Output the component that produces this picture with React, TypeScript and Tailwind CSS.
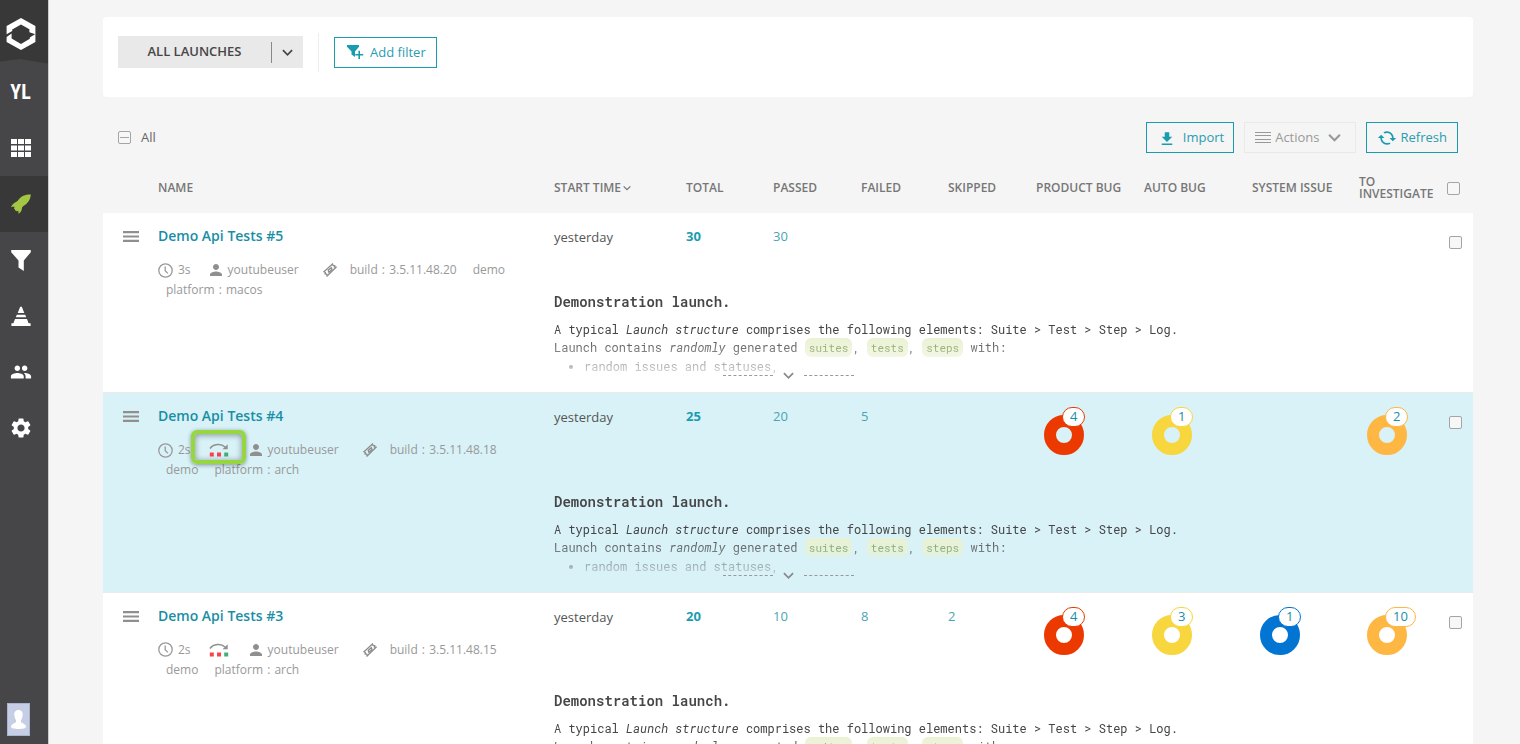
import React from "react";
import { MdCached, MdFileDownload, MdPeople, MdPerson, MdSettings } from "react-icons/md";

interface Attribute {
  key?: string;
  value: string;
}

interface Launch {
  number: number;
  duration: string;
  owner: string;
  attributes: Attribute[];
  retries: boolean;
  highlighted?: boolean;
  selected?: boolean;
  total: number;
  passed: number;
  failed?: number;
  skipped?: number;
  productBug?: number;
  autoBug?: number;
  systemIssue?: number;
  toInvestigate?: number;
}

const launches: Launch[] = [
  {
    number: 5,
    duration: "3s",
    owner: "youtubeuser",
    attributes: [{ key: "build", value: "3.5.11.48.20" }, { value: "demo" }, { key: "platform", value: "macos" }],
    retries: false,
    total: 30,
    passed: 30,
  },
  {
    number: 4,
    duration: "2s",
    owner: "youtubeuser",
    attributes: [{ key: "build", value: "3.5.11.48.18" }, { value: "demo" }, { key: "platform", value: "arch" }],
    retries: true,
    highlighted: true,
    selected: true,
    total: 25,
    passed: 20,
    failed: 5,
    productBug: 4,
    autoBug: 1,
    toInvestigate: 2,
  },
  {
    number: 3,
    duration: "2s",
    owner: "youtubeuser",
    attributes: [{ key: "build", value: "3.5.11.48.15" }, { value: "demo" }, { key: "platform", value: "arch" }],
    retries: true,
    total: 20,
    passed: 10,
    failed: 8,
    skipped: 2,
    productBug: 4,
    autoBug: 3,
    systemIssue: 1,
    toInvestigate: 10,
  },
];

const defectColors = {
  product: "border-[#ec3900]",
  auto: "border-[#f7d63e]",
  system: "border-[#0274d1]",
  investigate: "border-[#ffb743]",
};

function LogoIcon() {
  return (
    <svg width="30" height="34" viewBox="0 0 30 34" fill="#fff" aria-hidden="true">
      <path d="M15 1 29.400 9v8.200l-6 -2V12.300L15 7.400 6.200 12.500V14L.6 17.200V9z" />
      <path d="M15 33 .6 25V20l5-3.400v5L15 27l8.800-5.200v-1.400l5.600-3.400v8z" />
    </svg>
  );
}

function GridIcon() {
  const offsets = [0, 7, 14];
  return (
    <svg width="20" height="18" viewBox="0 0 20 18" fill="#fff" aria-hidden="true">
      {offsets.map((x) =>
        [0, 6.5, 13].map((y) => <rect key={`${x}-${y}`} x={x} y={y} width="6" height="5" />)
      )}
    </svg>
  );
}

function RocketIcon() {
  return (
    <svg width="20" height="20" viewBox="0 0 20 20" fill="#a3c644" aria-hidden="true">
      <path d="M19.800.4C14.500.3 10 2 7.300 6c-.5.8-1.100 1.300-1.900 1.700C2.800 8.700 1 10.700 0 13.300c1.100-.5 2.300-.6 3.600-.4l-.7 1.700 1.100.7-.2 1.100 1.300.1.600 1 1.500-.8c.4 1.200.5 2.200.2 3.300 2.300-1.500 3.400-3.500 3.600-6 .1-.8.700-1.300 1.400-1.900C16.700 9.300 19.600 5.500 19.800.4z" />
    </svg>
  );
}

function FunnelIcon() {
  return (
    <svg width="20" height="21" viewBox="0 0 20 21" fill="#fff" aria-hidden="true">
      <path d="M.2 0h19.600v2.200L12.800 10.500V21L7.500 17.500v-7L.2 2.200z" />
    </svg>
  );
}

function ConeIcon() {
  return (
    <svg width="20" height="20" viewBox="0 0 20 20" fill="#fff" aria-hidden="true">
      <path d="M9 1.200q1-1.400 2 0L13.300 7H6.700zM5.800 8.800h8.400l1 2.400H4.800zM4 13h12l1.600 4.200h2V20H.4v-2.800h2z" />
    </svg>
  );
}

function ClockIcon() {
  return (
    <svg width="15" height="15" viewBox="0 0 15 15" fill="none" stroke="#999" strokeWidth="1.300" aria-hidden="true">
      <circle cx="7.500" cy="7.500" r="6.700" />
      <path d="M7.200 3.500v4.300l2.700 2.600" />
    </svg>
  );
}

function TagIcon() {
  return (
    <svg width="14" height="14" viewBox="0 0 14 14" fill="none" stroke="#8c8c8c" strokeWidth="1.300" aria-hidden="true">
      <path d="M9.500 1 .9 8.700l1.500.8-.3 1.400 1.600.2.400 1.900 9-8.700-1.700-.3.300-1.400-1.700-.2z" />
      <path d="M8.300 4.700 5.200 7.300 5.900 9.300 9 6.600z" />
    </svg>
  );
}

function RetryIcon() {
  return (
    <svg width="20" height="14" viewBox="0 0 20 14" aria-hidden="true">
      <path d="M1 5.500C4.500.800 12 .200 16 4" fill="none" stroke="#8f8f8f" strokeWidth="1.600" />
      <path d="M18.700 1.200v5h-5.200z" fill="#8f8f8f" />
      <path d="M.8 9.500h4v4h-4zM8 9.500h4v4H8z" fill="#f9424a" />
      <path d="M15.200 9.500h4v4h-4z" fill="#41b073" />
    </svg>
  );
}

function ChevronIcon({ size, className }: { size: "sm" | "md" | "lg"; className?: string }) {
  const width = { sm: 8, md: 11, lg: 13 }[size];
  return (
    <svg width={width} height={width} viewBox="0 0 12 12" fill="none" stroke="currentColor" strokeWidth="1.900" className={className} aria-hidden="true">
      <path d="m1 3.500 5 5 5-5" />
    </svg>
  );
}

function Sidebar() {
  const item = "flex h-14 w-full items-center justify-center pr-[7px]";
  return (
    <nav aria-label="Main" className="flex h-full w-12 shrink-0 flex-col bg-[#464547]">
      <a href="#home" aria-label="Home" className="relative flex h-16 justify-center bg-[#383838] pr-[7px] pt-[17px]">
        <LogoIcon />
        <svg className="absolute bottom-0 left-0" width="48" height="5" viewBox="0 0 48 5" fill="#464547" aria-hidden="true">
          <path d="M0 2.500 20 0l28 4.500V5H0z" />
        </svg>
      </a>
      <a href="#project" className={`${item} font-['Roboto_Condensed','Open_Sans_Condensed','Roboto',sans-serif]`}>
        <span className="text-xl font-bold leading-5 text-white">YL</span>
      </a>
      <a href="#dashboards" aria-label="Dashboards" className={item}><GridIcon /></a>
      <a href="#launches" aria-label="Launches" aria-current="page" className={`${item} bg-[#383838]`}><RocketIcon /></a>
      <a href="#filters" aria-label="Filters" className={item}><FunnelIcon /></a>
      <a href="#debug" aria-label="Debug" className={item}><ConeIcon /></a>
      <a href="#members" aria-label="Members" className={item}><MdPeople size={22} color="#fff" /></a>
      <a href="#settings" aria-label="Settings" className={item}><MdSettings size={24} color="#fff" /></a>
      <button aria-label="Profile" className="mb-2 ml-[7px] mt-auto flex h-[33px] w-[23px] items-center justify-center border border-[#aab4d0] bg-[#c5cee5]">
        <svg width="15" height="19" viewBox="0 0 15 19" fill="#fff" aria-hidden="true">
          <path d="M7.500 0c3 0 4.400 2 4.200 5-.1 2.500-1 4-1.700 5v2c0 1 4.600 1.500 5 4.500.2 2-3 2.500-7.500 2.500S-.2 18.500 0 16.500C.4 13.500 5 13 5 12v-2C4.300 9 3.400 7.500 3.300 5 3.100 2 4.500 0 7.500 0z" />
        </svg>
      </button>
    </nav>
  );
}

function FilterBar() {
  return (
    <section className="flex h-20 items-start rounded-sm bg-white px-[15px] pt-4">
      <button className="mt-[3px] flex h-8 w-[185px] items-center bg-[#e9e9e9] font-semibold text-[#464547]">
        <span className="flex-1">ALL LAUNCHES</span>
        <span className="flex h-[21px] w-8 items-center justify-center border-l border-[#888]">
          <ChevronIcon size="md" />
        </span>
      </button>
      <div className="ml-[15px] h-[39px] w-px bg-[#eee]" />
      <button className="ml-[15px] mt-1 flex h-[31px] items-center gap-1.5 border border-[#1a9cb0] pl-3 pr-2.5 text-[#2a9cb0]">
        <svg width="17" height="15" viewBox="0 0 17 15" aria-hidden="true">
          <path d="M0 0h12v1.700L8 6.500V12L4.500 9.500v-3L0 1.700z" fill="#1a9cb0" />
          <path d="M8.300 9.700h7.900M12.200 5.800v8.200" stroke="#1a9cb0" strokeWidth="1.600" />
        </svg>
        Add filter
      </button>
    </section>
  );
}

const checkbox =
  "block size-[13px] appearance-none rounded-[2px] border border-[#a5a5a5] bg-[#f7f7f7]";

function Toolbar() {
  const button = "flex h-[31px] items-center border";
  return (
    <div className="flex h-[66px] items-start px-[15px] pt-[25px]">
      <label className="mt-1.5 flex items-center gap-2.5 text-[#666]">
        <input
          type="checkbox"
          className="flex size-[13px] appearance-none items-center rounded-[2px] border border-[#a5a5a5] bg-[#f7f7f7] px-px after:h-px after:w-full after:bg-[#a5a5a5]"
        />
        All
      </label>
      <div className="ml-auto flex gap-2.5">
        <button className={`${button} gap-[7px] border-[#1a9cb0] pl-[11px] pr-[9px] text-[#2a9cb0]`}>
          <MdFileDownload size={18} className="mt-0.5 text-[#1a9cb0]" />
          Import
        </button>
        <button className={`${button} gap-1 border-[#e9e9e9] px-2.5 text-[#999]`}>
          <svg width="16" height="11" viewBox="0 0 16 11" stroke="#999" strokeWidth="1.200" aria-hidden="true">
            <path d="M0 .5h16M0 3.500h16M0 7.500h16M0 10.500h16" />
          </svg>
          Actions
          <ChevronIcon size="lg" className="ml-1 mr-1" />
        </button>
        <button className={`${button} gap-1 border-[#1a9cb0] px-2.5 text-[#2a9cb0]`}>
          <MdCached size={20} className="-scale-x-100 text-[#1a9cb0]" />
          Refresh
        </button>
      </div>
    </div>
  );
}

function Donut({ count, kind }: { count?: number; kind: keyof typeof defectColors }) {
  if (count === undefined) return null;
  const color = defectColors[kind];
  return (
    <a href="#defects" className="relative ml-2 block w-10 pt-2">
      <span className={`block size-10 rounded-full border-12 ${color}`} />
      <span className={`absolute left-[18px] top-0 flex h-5 items-center rounded-full border bg-white px-[7px] text-[#1a8ea5] ${color}`}>
        {count}
      </span>
    </a>
  );
}

function Code({ children }: { children: React.ReactNode }) {
  return <code className="rounded-md bg-[#e9f1d2] px-1 py-0.5 font-[inherit] text-[11px] text-[#7d9a4b]">{children}</code>;
}

function Description() {
  return (
    <div className="relative h-[106px] overflow-hidden font-['Roboto_Mono','DejaVu_Sans_Mono',monospace] text-xs text-[#464547]">
      <div className="[mask-image:linear-gradient(#000_50px,transparent_98px)]">
        <h3 className="pt-1.5 text-sm font-semibold leading-5">Demonstration launch.</h3>
        <p className="mt-2 whitespace-nowrap leading-[18px]">
          A typical <em>Launch structure</em> comprises the following elements: Suite &gt; Test &gt; Step &gt; Log.
          <br />
          Launch contains <em>randomly</em> generated <Code>suites</Code>, <Code>tests</Code>, <Code>steps</Code> with:
        </p>
        <ul className="list-disc pl-[30px] leading-[18px]">
          <li>random issues and statuses,</li>
        </ul>
      </div>
      <button aria-label="Expand description" className="absolute bottom-[11px] left-[169px] flex items-center gap-2.5 text-[#888]">
        <span className="w-[50px] border-t border-dashed border-[#999]" />
        <ChevronIcon size="md" />
        <span className="w-[50px] border-t border-dashed border-[#999]" />
      </button>
    </div>
  );
}

function LaunchRows({ launch }: { launch: Launch }) {
  const hasDefects = launch.productBug !== undefined;
  const count = "pt-3.5 leading-[18px] text-[#4aa5b5]";
  return (
    <tbody className={`border-b border-[#ebebeb] align-top ${launch.selected ? "bg-[#d8f2f7]" : "bg-white"}`}>
      <tr className={hasDefects ? "h-[93px]" : "h-[73px]"}>
        <td rowSpan={2} className="pl-5 pt-[18px]">
          <button aria-label="Launch menu" className="block">
            <svg width="16" height="11" viewBox="0 0 16 11" fill="#8f8f8f" className="block" aria-hidden="true">
              <path d="M0 0h16v2.200H0zM0 4.400h16v2.200H0zM0 8.800h16V11H0z" />
            </svg>
          </button>
        </td>
        <td rowSpan={2} className="pr-5 pt-[13px]">
          <a href="#launch" className="block text-sm font-semibold leading-5 text-[#1a8ea5]">
            Demo Api Tests #{launch.number}
          </a>
          <div className="mt-3.5 flex flex-wrap items-center text-xs leading-5 text-[#999]">
            <span className="mr-[18px] flex items-center gap-[5px]"><ClockIcon />{launch.duration}</span>
            {launch.retries && (
              <span className="relative mr-5">
                <RetryIcon />
                {launch.highlighted && (
                  <span className="absolute -left-[18px] -top-[13px] h-[34px] w-[55px] rounded-md border-4 border-[#96d640] shadow-[0_1px_4px_#0006,inset_0_1px_6px_#0006]" />
                )}
              </span>
            )}
            <span className="mr-6 flex items-center gap-[3px]"><MdPerson size={18} className="-ml-0.5 text-[#8f8f8f]" />{launch.owner}</span>
            <span className="mr-[5px]"><TagIcon /></span>
            {launch.attributes.map(({ key, value }) => (
              <span key={value} className="mx-2">
                {key && <>{key} <span className="mx-px">:</span> </>}
                {value}
              </span>
            ))}
          </div>
        </td>
        <td className="pt-[15px] leading-[18px] text-[#555]">yesterday</td>
        <td className="pt-3.5 font-bold leading-[18px] text-[#1a9cb0]">{launch.total}</td>
        <td className={count}>{launch.passed}</td>
        <td className={count}>{launch.failed}</td>
        <td className={count}>{launch.skipped}</td>
        <td className="pt-3.5"><Donut count={launch.productBug} kind="product" /></td>
        <td className="pt-3.5"><Donut count={launch.autoBug} kind="auto" /></td>
        <td className="pt-3.5"><Donut count={launch.systemIssue} kind="system" /></td>
        <td className="pt-3.5"><Donut count={launch.toInvestigate} kind="investigate" /></td>
        <td className="pl-[5px] pt-[23px]">
          <input type="checkbox" aria-label={`Select launch ${launch.number}`} className={checkbox} />
        </td>
      </tr>
      <tr>
        <td colSpan={10}><Description /></td>
      </tr>
    </tbody>
  );
}

function LaunchTable() {
  return (
    <table className="w-full table-fixed border-collapse text-left">
      <colgroup>
        <col className="w-[55px]" />
        <col />
        <col className="w-[132px]" />
        <col className="w-[87px]" />
        <col className="w-[88px]" />
        <col className="w-[87px]" />
        <col className="w-[88px]" />
        <col className="w-[108px]" />
        <col className="w-[108px]" />
        <col className="w-[107px]" />
        <col className="w-[85px]" />
        <col className="w-[29px]" />
      </colgroup>
      <thead>
        <tr className="h-[50px] text-xs leading-3 text-[#777] [&>th]:font-semibold">
          <th />
          <th>NAME</th>
          <th>
            <button className="flex items-center gap-0.5">
              START TIME <ChevronIcon size="sm" />
            </button>
          </th>
          <th>TOTAL</th>
          <th>PASSED</th>
          <th>FAILED</th>
          <th>SKIPPED</th>
          <th>PRODUCT BUG</th>
          <th>AUTO BUG</th>
          <th>SYSTEM ISSUE</th>
          <th>TO INVESTIGATE</th>
          <th className="pl-[3px]"><input type="checkbox" aria-label="Select all launches" className={checkbox} /></th>
        </tr>
      </thead>
      {launches.map((launch) => (
        <LaunchRows key={launch.number} launch={launch} />
      ))}
    </table>
  );
}

export default function App() {
  return (
    <div className="flex h-screen bg-[#f5f5f5] font-['Open_Sans',sans-serif] text-[13px]">
      <Sidebar />
      <main className="min-w-0 flex-1 overflow-y-auto border-l border-[#ccc] pl-[54px] pr-[47px] pt-[17px] [scrollbar-width:none]">
        <FilterBar />
        <Toolbar />
        <LaunchTable />
      </main>
    </div>
  );
}
